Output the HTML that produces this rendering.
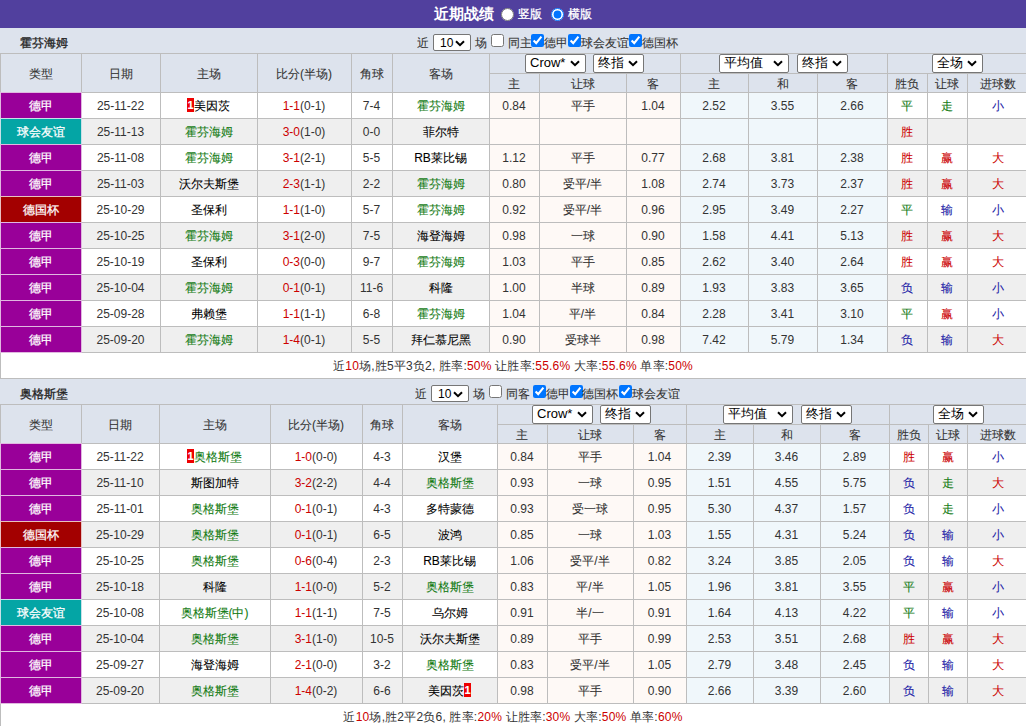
<!DOCTYPE html><html><head><meta charset="utf-8"><style>
html,body{margin:0;padding:0;width:1026px;height:726px;overflow:hidden;background:#fff;}
body{position:relative;font-family:"Liberation Sans",sans-serif;font-size:12px;color:#222;}
.cj{-webkit-text-stroke-width:0.08px;}
div{position:absolute;box-sizing:border-box;}
.c{text-align:center;height:26px;line-height:28px;white-space:nowrap;font-size:12px;color:#333;}
.h{color:#333;}
.nm{font-weight:normal;-webkit-text-stroke-width:0.3px;font-size:12px;color:#222;white-space:nowrap;padding-top:3px;}
.ctl{height:25px;line-height:31px;font-size:12px;color:#333;white-space:nowrap;}
.sel{background:#fff;border:1px solid #767676;border-radius:2px;font-size:13px;color:#000;line-height:15px;}
.sel span{position:absolute;left:4px;top:0;}
.sel svg{position:absolute;right:5px;top:5px;}
.rk{display:inline-block;background:#e00;color:#fff;font-weight:bold;width:7px;height:14px;line-height:14px;font-size:11px;vertical-align:-2px;text-align:center;overflow:hidden;}
.title{left:0;top:0;width:1026px;height:28px;background:#51409e;}
</style></head><body>

<div class="title"></div>
<div style="left:434px;top:0;height:28px;line-height:28px;color:#fff;font-weight:bold;font-size:15px;white-space:nowrap;">近期战绩</div>
<input type="radio" name="r" style="position:absolute;left:501px;top:8px;margin:0;width:13px;height:13px;">
<div style="left:518px;top:0;height:28px;line-height:29px;color:#fff;font-size:12px;white-space:nowrap;-webkit-text-stroke-width:0.3px;">竖版</div>
<input type="radio" name="r" checked style="position:absolute;left:551px;top:8px;margin:0;width:13px;height:13px;">
<div style="left:568px;top:0;height:28px;line-height:29px;color:#fff;font-size:12px;white-space:nowrap;-webkit-text-stroke-width:0.3px;">横版</div>
<div style="left:0px;top:28px;width:1026px;height:25px;background:#dde3ed;"></div>
<div class="nm" style="left:20px;top:28px;height:25px;line-height:25px;">霍芬海姆</div>
<div style="left:0px;top:53px;width:1026px;height:39px;background:#dde3ed;"></div>
<div style="left:0px;top:92px;width:1026px;height:26px;background:#ffffff;"></div>
<div style="left:489px;top:92px;width:191px;height:26px;background:#fef9f6;"></div>
<div style="left:680px;top:92px;width:207px;height:26px;background:#f0f7fb;"></div>
<div style="left:0px;top:118px;width:1026px;height:26px;background:#efefef;"></div>
<div style="left:489px;top:118px;width:191px;height:26px;background:#fef9f6;"></div>
<div style="left:680px;top:118px;width:207px;height:26px;background:#f0f7fb;"></div>
<div style="left:0px;top:144px;width:1026px;height:26px;background:#ffffff;"></div>
<div style="left:489px;top:144px;width:191px;height:26px;background:#fef9f6;"></div>
<div style="left:680px;top:144px;width:207px;height:26px;background:#f0f7fb;"></div>
<div style="left:0px;top:170px;width:1026px;height:26px;background:#efefef;"></div>
<div style="left:489px;top:170px;width:191px;height:26px;background:#fef9f6;"></div>
<div style="left:680px;top:170px;width:207px;height:26px;background:#f0f7fb;"></div>
<div style="left:0px;top:196px;width:1026px;height:26px;background:#ffffff;"></div>
<div style="left:489px;top:196px;width:191px;height:26px;background:#fef9f6;"></div>
<div style="left:680px;top:196px;width:207px;height:26px;background:#f0f7fb;"></div>
<div style="left:0px;top:222px;width:1026px;height:26px;background:#efefef;"></div>
<div style="left:489px;top:222px;width:191px;height:26px;background:#fef9f6;"></div>
<div style="left:680px;top:222px;width:207px;height:26px;background:#f0f7fb;"></div>
<div style="left:0px;top:248px;width:1026px;height:26px;background:#ffffff;"></div>
<div style="left:489px;top:248px;width:191px;height:26px;background:#fef9f6;"></div>
<div style="left:680px;top:248px;width:207px;height:26px;background:#f0f7fb;"></div>
<div style="left:0px;top:274px;width:1026px;height:26px;background:#efefef;"></div>
<div style="left:489px;top:274px;width:191px;height:26px;background:#fef9f6;"></div>
<div style="left:680px;top:274px;width:207px;height:26px;background:#f0f7fb;"></div>
<div style="left:0px;top:300px;width:1026px;height:26px;background:#ffffff;"></div>
<div style="left:489px;top:300px;width:191px;height:26px;background:#fef9f6;"></div>
<div style="left:680px;top:300px;width:207px;height:26px;background:#f0f7fb;"></div>
<div style="left:0px;top:326px;width:1026px;height:26px;background:#efefef;"></div>
<div style="left:489px;top:326px;width:191px;height:26px;background:#fef9f6;"></div>
<div style="left:680px;top:326px;width:207px;height:26px;background:#f0f7fb;"></div>
<div style="left:0px;top:352px;width:1026px;height:26px;background:#fff;"></div>
<div style="left:0px;top:378px;width:1028px;height:1px;background:#bdbdbd;"></div>
<div style="left:0px;top:53px;width:1028px;height:1px;background:#bdbdbd;"></div>
<div style="left:489px;top:73px;width:539px;height:1px;background:#bdbdbd;"></div>
<div style="left:0px;top:92px;width:1028px;height:1px;background:#bdbdbd;"></div>
<div style="left:0px;top:118px;width:1028px;height:1px;background:#bdbdbd;"></div>
<div style="left:0px;top:144px;width:1028px;height:1px;background:#bdbdbd;"></div>
<div style="left:0px;top:170px;width:1028px;height:1px;background:#bdbdbd;"></div>
<div style="left:0px;top:196px;width:1028px;height:1px;background:#bdbdbd;"></div>
<div style="left:0px;top:222px;width:1028px;height:1px;background:#bdbdbd;"></div>
<div style="left:0px;top:248px;width:1028px;height:1px;background:#bdbdbd;"></div>
<div style="left:0px;top:274px;width:1028px;height:1px;background:#bdbdbd;"></div>
<div style="left:0px;top:300px;width:1028px;height:1px;background:#bdbdbd;"></div>
<div style="left:0px;top:326px;width:1028px;height:1px;background:#bdbdbd;"></div>
<div style="left:0px;top:352px;width:1028px;height:1px;background:#bdbdbd;"></div>
<div style="left:0px;top:53px;width:1px;height:325px;background:#bdbdbd;"></div>
<div style="left:81px;top:53px;width:1px;height:299px;background:#bdbdbd;"></div>
<div style="left:160px;top:53px;width:1px;height:299px;background:#bdbdbd;"></div>
<div style="left:257px;top:53px;width:1px;height:299px;background:#bdbdbd;"></div>
<div style="left:351px;top:53px;width:1px;height:299px;background:#bdbdbd;"></div>
<div style="left:392px;top:53px;width:1px;height:299px;background:#bdbdbd;"></div>
<div style="left:489px;top:53px;width:1px;height:299px;background:#bdbdbd;"></div>
<div style="left:539px;top:73px;width:1px;height:279px;background:#bdbdbd;"></div>
<div style="left:626px;top:73px;width:1px;height:279px;background:#bdbdbd;"></div>
<div style="left:680px;top:53px;width:1px;height:299px;background:#bdbdbd;"></div>
<div style="left:748px;top:73px;width:1px;height:279px;background:#bdbdbd;"></div>
<div style="left:817px;top:73px;width:1px;height:279px;background:#bdbdbd;"></div>
<div style="left:887px;top:53px;width:1px;height:299px;background:#bdbdbd;"></div>
<div style="left:927px;top:73px;width:1px;height:279px;background:#bdbdbd;"></div>
<div style="left:967px;top:73px;width:1px;height:279px;background:#bdbdbd;"></div>
<div style="left:1028px;top:53px;width:1px;height:299px;background:#bdbdbd;"></div>
<div style="left:0px;top:92px;width:82px;height:27px;background:#990099;border:1px solid #e0b8e0;"></div>
<div style="left:0px;top:118px;width:82px;height:27px;background:#04a5a5;border:1px solid #c8e0e8;"></div>
<div style="left:0px;top:144px;width:82px;height:27px;background:#990099;border:1px solid #e0b8e0;"></div>
<div style="left:0px;top:170px;width:82px;height:27px;background:#990099;border:1px solid #e0b8e0;"></div>
<div style="left:0px;top:196px;width:82px;height:27px;background:#a30000;border:1px solid #e8c0c0;"></div>
<div style="left:0px;top:222px;width:82px;height:27px;background:#990099;border:1px solid #e0b8e0;"></div>
<div style="left:0px;top:248px;width:82px;height:27px;background:#990099;border:1px solid #e0b8e0;"></div>
<div style="left:0px;top:274px;width:82px;height:27px;background:#990099;border:1px solid #e0b8e0;"></div>
<div style="left:0px;top:300px;width:82px;height:27px;background:#990099;border:1px solid #e0b8e0;"></div>
<div style="left:0px;top:326px;width:82px;height:27px;background:#990099;border:1px solid #e0b8e0;"></div>
<div class="c h cj" style="left:0px;top:53px;width:81px;height:39px;line-height:42px;">类型</div>
<div class="c h cj" style="left:81px;top:53px;width:79px;height:39px;line-height:42px;">日期</div>
<div class="c h cj" style="left:160px;top:53px;width:97px;height:39px;line-height:42px;">主场</div>
<div class="c h cj" style="left:257px;top:53px;width:94px;height:39px;line-height:42px;">比分(半场)</div>
<div class="c h cj" style="left:351px;top:53px;width:41px;height:39px;line-height:42px;">角球</div>
<div class="c h cj" style="left:392px;top:53px;width:97px;height:39px;line-height:42px;">客场</div>
<div class="c h cj" style="left:489px;top:73px;width:50px;height:19px;line-height:22px;">主</div>
<div class="c h cj" style="left:539px;top:73px;width:87px;height:19px;line-height:22px;">让球</div>
<div class="c h cj" style="left:626px;top:73px;width:54px;height:19px;line-height:22px;">客</div>
<div class="c h cj" style="left:680px;top:73px;width:68px;height:19px;line-height:22px;">主</div>
<div class="c h cj" style="left:748px;top:73px;width:69px;height:19px;line-height:22px;">和</div>
<div class="c h cj" style="left:817px;top:73px;width:70px;height:19px;line-height:22px;">客</div>
<div class="c h cj" style="left:887px;top:73px;width:40px;height:19px;line-height:22px;">胜负</div>
<div class="c h cj" style="left:927px;top:73px;width:40px;height:19px;line-height:22px;">让球</div>
<div class="c h cj" style="left:967px;top:73px;width:61px;height:19px;line-height:22px;">进球数</div>
<div class="sel" style="left:525px;top:54px;width:61px;height:19px;"><span style="">Crow*</span><svg width="10" height="7" viewBox="0 0 10 7"><path d="M1 1.2 L5 5.2 L9 1.2" fill="none" stroke="#000" stroke-width="2"/></svg></div>
<div class="sel" style="left:593px;top:54px;width:51px;height:19px;"><span style="">终指</span><svg width="10" height="7" viewBox="0 0 10 7"><path d="M1 1.2 L5 5.2 L9 1.2" fill="none" stroke="#000" stroke-width="2"/></svg></div>
<div class="sel" style="left:719px;top:54px;width:70px;height:19px;"><span style="">平均值</span><svg width="10" height="7" viewBox="0 0 10 7"><path d="M1 1.2 L5 5.2 L9 1.2" fill="none" stroke="#000" stroke-width="2"/></svg></div>
<div class="sel" style="left:797px;top:54px;width:51px;height:19px;"><span style="">终指</span><svg width="10" height="7" viewBox="0 0 10 7"><path d="M1 1.2 L5 5.2 L9 1.2" fill="none" stroke="#000" stroke-width="2"/></svg></div>
<div class="sel" style="left:932px;top:54px;width:51px;height:19px;"><span style="">全场</span><svg width="10" height="7" viewBox="0 0 10 7"><path d="M1 1.2 L5 5.2 L9 1.2" fill="none" stroke="#000" stroke-width="2"/></svg></div>
<div class="ctl cj" style="left:417px;top:28px;">近</div>
<div class="sel" style="left:433px;top:34px;width:38px;height:17px;"><span style="font-size:12px;left:6px;top:1px;">10</span><svg width="10" height="7" viewBox="0 0 10 7"><path d="M1 1.2 L5 5.2 L9 1.2" fill="none" stroke="#000" stroke-width="2"/></svg></div>
<div class="ctl cj" style="left:475px;top:28px;">场</div>
<input type="checkbox"  style="position:absolute;left:491px;top:34px;margin:0;width:13px;height:13px;">
<div class="ctl cj" style="left:508px;top:28px;">同主</div>
<input type="checkbox" checked style="position:absolute;left:531px;top:34px;margin:0;width:13px;height:13px;">
<div class="ctl cj" style="left:544px;top:28px;">德甲</div>
<input type="checkbox" checked style="position:absolute;left:568px;top:34px;margin:0;width:13px;height:13px;">
<div class="ctl cj" style="left:581px;top:28px;">球会友谊</div>
<input type="checkbox" checked style="position:absolute;left:629px;top:34px;margin:0;width:13px;height:13px;">
<div class="ctl cj" style="left:642px;top:28px;">德国杯</div>
<div class="c" style="left:0px;top:92px;width:81px;color:#fff;-webkit-text-stroke-width:0.25px;">德甲</div>
<div class="c" style="left:81px;top:92px;width:79px;">25-11-22</div>
<div class="c" style="left:160px;top:92px;width:97px;-webkit-text-stroke-width:0.08px;"><span class="rk">1</span><span style="color:#000">美因茨</span></div>
<div class="c" style="left:257px;top:92px;width:94px;"><span style="color:#cc0000">1-1</span>(0-1)</div>
<div class="c" style="left:351px;top:92px;width:41px;">7-4</div>
<div class="c" style="left:392px;top:92px;width:97px;-webkit-text-stroke-width:0.08px;"><span style="color:#117a11">霍芬海姆</span></div>
<div class="c" style="left:489px;top:92px;width:50px;">0.84</div>
<div class="c" style="left:539px;top:92px;width:87px;-webkit-text-stroke-width:0.08px;">平手</div>
<div class="c" style="left:626px;top:92px;width:54px;">1.04</div>
<div class="c" style="left:680px;top:92px;width:68px;">2.52</div>
<div class="c" style="left:748px;top:92px;width:69px;">3.55</div>
<div class="c" style="left:817px;top:92px;width:70px;">2.66</div>
<div class="c" style="left:887px;top:92px;width:40px;-webkit-text-stroke-width:0.08px;"><span style="color:#117a11">平</span></div>
<div class="c" style="left:927px;top:92px;width:40px;-webkit-text-stroke-width:0.08px;"><span style="color:#117a11">走</span></div>
<div class="c" style="left:967px;top:92px;width:61px;-webkit-text-stroke-width:0.08px;"><span style="color:#1a1aa6">小</span></div>
<div class="c" style="left:0px;top:118px;width:81px;color:#fff;-webkit-text-stroke-width:0.25px;">球会友谊</div>
<div class="c" style="left:81px;top:118px;width:79px;">25-11-13</div>
<div class="c" style="left:160px;top:118px;width:97px;-webkit-text-stroke-width:0.08px;"><span style="color:#117a11">霍芬海姆</span></div>
<div class="c" style="left:257px;top:118px;width:94px;"><span style="color:#cc0000">3-0</span>(1-0)</div>
<div class="c" style="left:351px;top:118px;width:41px;">0-0</div>
<div class="c" style="left:392px;top:118px;width:97px;-webkit-text-stroke-width:0.08px;"><span style="color:#000">菲尔特</span></div>
<div class="c" style="left:489px;top:118px;width:50px;"></div>
<div class="c" style="left:539px;top:118px;width:87px;-webkit-text-stroke-width:0.08px;"></div>
<div class="c" style="left:626px;top:118px;width:54px;"></div>
<div class="c" style="left:680px;top:118px;width:68px;"></div>
<div class="c" style="left:748px;top:118px;width:69px;"></div>
<div class="c" style="left:817px;top:118px;width:70px;"></div>
<div class="c" style="left:887px;top:118px;width:40px;-webkit-text-stroke-width:0.08px;"><span style="color:#cc0000">胜</span></div>
<div class="c" style="left:927px;top:118px;width:40px;-webkit-text-stroke-width:0.08px;"><span style="color:#000"></span></div>
<div class="c" style="left:967px;top:118px;width:61px;-webkit-text-stroke-width:0.08px;"><span style="color:#000"></span></div>
<div class="c" style="left:0px;top:144px;width:81px;color:#fff;-webkit-text-stroke-width:0.25px;">德甲</div>
<div class="c" style="left:81px;top:144px;width:79px;">25-11-08</div>
<div class="c" style="left:160px;top:144px;width:97px;-webkit-text-stroke-width:0.08px;"><span style="color:#117a11">霍芬海姆</span></div>
<div class="c" style="left:257px;top:144px;width:94px;"><span style="color:#cc0000">3-1</span>(2-1)</div>
<div class="c" style="left:351px;top:144px;width:41px;">5-5</div>
<div class="c" style="left:392px;top:144px;width:97px;-webkit-text-stroke-width:0.08px;"><span style="color:#000">RB莱比锡</span></div>
<div class="c" style="left:489px;top:144px;width:50px;">1.12</div>
<div class="c" style="left:539px;top:144px;width:87px;-webkit-text-stroke-width:0.08px;">平手</div>
<div class="c" style="left:626px;top:144px;width:54px;">0.77</div>
<div class="c" style="left:680px;top:144px;width:68px;">2.68</div>
<div class="c" style="left:748px;top:144px;width:69px;">3.81</div>
<div class="c" style="left:817px;top:144px;width:70px;">2.38</div>
<div class="c" style="left:887px;top:144px;width:40px;-webkit-text-stroke-width:0.08px;"><span style="color:#cc0000">胜</span></div>
<div class="c" style="left:927px;top:144px;width:40px;-webkit-text-stroke-width:0.08px;"><span style="color:#cc0000">赢</span></div>
<div class="c" style="left:967px;top:144px;width:61px;-webkit-text-stroke-width:0.08px;"><span style="color:#cc0000">大</span></div>
<div class="c" style="left:0px;top:170px;width:81px;color:#fff;-webkit-text-stroke-width:0.25px;">德甲</div>
<div class="c" style="left:81px;top:170px;width:79px;">25-11-03</div>
<div class="c" style="left:160px;top:170px;width:97px;-webkit-text-stroke-width:0.08px;"><span style="color:#000">沃尔夫斯堡</span></div>
<div class="c" style="left:257px;top:170px;width:94px;"><span style="color:#cc0000">2-3</span>(1-1)</div>
<div class="c" style="left:351px;top:170px;width:41px;">2-2</div>
<div class="c" style="left:392px;top:170px;width:97px;-webkit-text-stroke-width:0.08px;"><span style="color:#117a11">霍芬海姆</span></div>
<div class="c" style="left:489px;top:170px;width:50px;">0.80</div>
<div class="c" style="left:539px;top:170px;width:87px;-webkit-text-stroke-width:0.08px;">受平/半</div>
<div class="c" style="left:626px;top:170px;width:54px;">1.08</div>
<div class="c" style="left:680px;top:170px;width:68px;">2.74</div>
<div class="c" style="left:748px;top:170px;width:69px;">3.73</div>
<div class="c" style="left:817px;top:170px;width:70px;">2.37</div>
<div class="c" style="left:887px;top:170px;width:40px;-webkit-text-stroke-width:0.08px;"><span style="color:#cc0000">胜</span></div>
<div class="c" style="left:927px;top:170px;width:40px;-webkit-text-stroke-width:0.08px;"><span style="color:#cc0000">赢</span></div>
<div class="c" style="left:967px;top:170px;width:61px;-webkit-text-stroke-width:0.08px;"><span style="color:#cc0000">大</span></div>
<div class="c" style="left:0px;top:196px;width:81px;color:#fff;-webkit-text-stroke-width:0.25px;">德国杯</div>
<div class="c" style="left:81px;top:196px;width:79px;">25-10-29</div>
<div class="c" style="left:160px;top:196px;width:97px;-webkit-text-stroke-width:0.08px;"><span style="color:#000">圣保利</span></div>
<div class="c" style="left:257px;top:196px;width:94px;"><span style="color:#cc0000">1-1</span>(1-0)</div>
<div class="c" style="left:351px;top:196px;width:41px;">5-7</div>
<div class="c" style="left:392px;top:196px;width:97px;-webkit-text-stroke-width:0.08px;"><span style="color:#117a11">霍芬海姆</span></div>
<div class="c" style="left:489px;top:196px;width:50px;">0.92</div>
<div class="c" style="left:539px;top:196px;width:87px;-webkit-text-stroke-width:0.08px;">受平/半</div>
<div class="c" style="left:626px;top:196px;width:54px;">0.96</div>
<div class="c" style="left:680px;top:196px;width:68px;">2.95</div>
<div class="c" style="left:748px;top:196px;width:69px;">3.49</div>
<div class="c" style="left:817px;top:196px;width:70px;">2.27</div>
<div class="c" style="left:887px;top:196px;width:40px;-webkit-text-stroke-width:0.08px;"><span style="color:#117a11">平</span></div>
<div class="c" style="left:927px;top:196px;width:40px;-webkit-text-stroke-width:0.08px;"><span style="color:#1a1aa6">输</span></div>
<div class="c" style="left:967px;top:196px;width:61px;-webkit-text-stroke-width:0.08px;"><span style="color:#1a1aa6">小</span></div>
<div class="c" style="left:0px;top:222px;width:81px;color:#fff;-webkit-text-stroke-width:0.25px;">德甲</div>
<div class="c" style="left:81px;top:222px;width:79px;">25-10-25</div>
<div class="c" style="left:160px;top:222px;width:97px;-webkit-text-stroke-width:0.08px;"><span style="color:#117a11">霍芬海姆</span></div>
<div class="c" style="left:257px;top:222px;width:94px;"><span style="color:#cc0000">3-1</span>(2-0)</div>
<div class="c" style="left:351px;top:222px;width:41px;">7-5</div>
<div class="c" style="left:392px;top:222px;width:97px;-webkit-text-stroke-width:0.08px;"><span style="color:#000">海登海姆</span></div>
<div class="c" style="left:489px;top:222px;width:50px;">0.98</div>
<div class="c" style="left:539px;top:222px;width:87px;-webkit-text-stroke-width:0.08px;">一球</div>
<div class="c" style="left:626px;top:222px;width:54px;">0.90</div>
<div class="c" style="left:680px;top:222px;width:68px;">1.58</div>
<div class="c" style="left:748px;top:222px;width:69px;">4.41</div>
<div class="c" style="left:817px;top:222px;width:70px;">5.13</div>
<div class="c" style="left:887px;top:222px;width:40px;-webkit-text-stroke-width:0.08px;"><span style="color:#cc0000">胜</span></div>
<div class="c" style="left:927px;top:222px;width:40px;-webkit-text-stroke-width:0.08px;"><span style="color:#cc0000">赢</span></div>
<div class="c" style="left:967px;top:222px;width:61px;-webkit-text-stroke-width:0.08px;"><span style="color:#cc0000">大</span></div>
<div class="c" style="left:0px;top:248px;width:81px;color:#fff;-webkit-text-stroke-width:0.25px;">德甲</div>
<div class="c" style="left:81px;top:248px;width:79px;">25-10-19</div>
<div class="c" style="left:160px;top:248px;width:97px;-webkit-text-stroke-width:0.08px;"><span style="color:#000">圣保利</span></div>
<div class="c" style="left:257px;top:248px;width:94px;"><span style="color:#cc0000">0-3</span>(0-0)</div>
<div class="c" style="left:351px;top:248px;width:41px;">9-7</div>
<div class="c" style="left:392px;top:248px;width:97px;-webkit-text-stroke-width:0.08px;"><span style="color:#117a11">霍芬海姆</span></div>
<div class="c" style="left:489px;top:248px;width:50px;">1.03</div>
<div class="c" style="left:539px;top:248px;width:87px;-webkit-text-stroke-width:0.08px;">平手</div>
<div class="c" style="left:626px;top:248px;width:54px;">0.85</div>
<div class="c" style="left:680px;top:248px;width:68px;">2.62</div>
<div class="c" style="left:748px;top:248px;width:69px;">3.40</div>
<div class="c" style="left:817px;top:248px;width:70px;">2.64</div>
<div class="c" style="left:887px;top:248px;width:40px;-webkit-text-stroke-width:0.08px;"><span style="color:#cc0000">胜</span></div>
<div class="c" style="left:927px;top:248px;width:40px;-webkit-text-stroke-width:0.08px;"><span style="color:#cc0000">赢</span></div>
<div class="c" style="left:967px;top:248px;width:61px;-webkit-text-stroke-width:0.08px;"><span style="color:#cc0000">大</span></div>
<div class="c" style="left:0px;top:274px;width:81px;color:#fff;-webkit-text-stroke-width:0.25px;">德甲</div>
<div class="c" style="left:81px;top:274px;width:79px;">25-10-04</div>
<div class="c" style="left:160px;top:274px;width:97px;-webkit-text-stroke-width:0.08px;"><span style="color:#117a11">霍芬海姆</span></div>
<div class="c" style="left:257px;top:274px;width:94px;"><span style="color:#cc0000">0-1</span>(0-1)</div>
<div class="c" style="left:351px;top:274px;width:41px;">11-6</div>
<div class="c" style="left:392px;top:274px;width:97px;-webkit-text-stroke-width:0.08px;"><span style="color:#000">科隆</span></div>
<div class="c" style="left:489px;top:274px;width:50px;">1.00</div>
<div class="c" style="left:539px;top:274px;width:87px;-webkit-text-stroke-width:0.08px;">半球</div>
<div class="c" style="left:626px;top:274px;width:54px;">0.89</div>
<div class="c" style="left:680px;top:274px;width:68px;">1.93</div>
<div class="c" style="left:748px;top:274px;width:69px;">3.83</div>
<div class="c" style="left:817px;top:274px;width:70px;">3.65</div>
<div class="c" style="left:887px;top:274px;width:40px;-webkit-text-stroke-width:0.08px;"><span style="color:#1a1aa6">负</span></div>
<div class="c" style="left:927px;top:274px;width:40px;-webkit-text-stroke-width:0.08px;"><span style="color:#1a1aa6">输</span></div>
<div class="c" style="left:967px;top:274px;width:61px;-webkit-text-stroke-width:0.08px;"><span style="color:#1a1aa6">小</span></div>
<div class="c" style="left:0px;top:300px;width:81px;color:#fff;-webkit-text-stroke-width:0.25px;">德甲</div>
<div class="c" style="left:81px;top:300px;width:79px;">25-09-28</div>
<div class="c" style="left:160px;top:300px;width:97px;-webkit-text-stroke-width:0.08px;"><span style="color:#000">弗赖堡</span></div>
<div class="c" style="left:257px;top:300px;width:94px;"><span style="color:#cc0000">1-1</span>(1-1)</div>
<div class="c" style="left:351px;top:300px;width:41px;">6-8</div>
<div class="c" style="left:392px;top:300px;width:97px;-webkit-text-stroke-width:0.08px;"><span style="color:#117a11">霍芬海姆</span></div>
<div class="c" style="left:489px;top:300px;width:50px;">1.04</div>
<div class="c" style="left:539px;top:300px;width:87px;-webkit-text-stroke-width:0.08px;">平/半</div>
<div class="c" style="left:626px;top:300px;width:54px;">0.84</div>
<div class="c" style="left:680px;top:300px;width:68px;">2.28</div>
<div class="c" style="left:748px;top:300px;width:69px;">3.41</div>
<div class="c" style="left:817px;top:300px;width:70px;">3.10</div>
<div class="c" style="left:887px;top:300px;width:40px;-webkit-text-stroke-width:0.08px;"><span style="color:#117a11">平</span></div>
<div class="c" style="left:927px;top:300px;width:40px;-webkit-text-stroke-width:0.08px;"><span style="color:#cc0000">赢</span></div>
<div class="c" style="left:967px;top:300px;width:61px;-webkit-text-stroke-width:0.08px;"><span style="color:#1a1aa6">小</span></div>
<div class="c" style="left:0px;top:326px;width:81px;color:#fff;-webkit-text-stroke-width:0.25px;">德甲</div>
<div class="c" style="left:81px;top:326px;width:79px;">25-09-20</div>
<div class="c" style="left:160px;top:326px;width:97px;-webkit-text-stroke-width:0.08px;"><span style="color:#117a11">霍芬海姆</span></div>
<div class="c" style="left:257px;top:326px;width:94px;"><span style="color:#cc0000">1-4</span>(0-1)</div>
<div class="c" style="left:351px;top:326px;width:41px;">5-5</div>
<div class="c" style="left:392px;top:326px;width:97px;-webkit-text-stroke-width:0.08px;"><span style="color:#000">拜仁慕尼黑</span></div>
<div class="c" style="left:489px;top:326px;width:50px;">0.90</div>
<div class="c" style="left:539px;top:326px;width:87px;-webkit-text-stroke-width:0.08px;">受球半</div>
<div class="c" style="left:626px;top:326px;width:54px;">0.98</div>
<div class="c" style="left:680px;top:326px;width:68px;">7.42</div>
<div class="c" style="left:748px;top:326px;width:69px;">5.79</div>
<div class="c" style="left:817px;top:326px;width:70px;">1.34</div>
<div class="c" style="left:887px;top:326px;width:40px;-webkit-text-stroke-width:0.08px;"><span style="color:#1a1aa6">负</span></div>
<div class="c" style="left:927px;top:326px;width:40px;-webkit-text-stroke-width:0.08px;"><span style="color:#1a1aa6">输</span></div>
<div class="c" style="left:967px;top:326px;width:61px;-webkit-text-stroke-width:0.08px;"><span style="color:#cc0000">大</span></div>
<div class="c" style="left:0;top:352px;width:1026px;letter-spacing:0.2px;">近<span style="color:#cc0000">10</span>场,胜5平3负2, 胜率:<span style="color:#cc0000">50%</span> 让胜率:<span style="color:#cc0000">55.6%</span> 大率:<span style="color:#cc0000">55.6%</span> 单率:<span style="color:#cc0000">50%</span></div>
<div style="left:0px;top:379px;width:1026px;height:25px;background:#dde3ed;"></div>
<div class="nm" style="left:20px;top:379px;height:25px;line-height:25px;">奥格斯堡</div>
<div style="left:0px;top:404px;width:1026px;height:39px;background:#dde3ed;"></div>
<div style="left:0px;top:443px;width:1026px;height:26px;background:#ffffff;"></div>
<div style="left:497px;top:443px;width:189px;height:26px;background:#fef9f6;"></div>
<div style="left:686px;top:443px;width:203px;height:26px;background:#f0f7fb;"></div>
<div style="left:0px;top:469px;width:1026px;height:26px;background:#efefef;"></div>
<div style="left:497px;top:469px;width:189px;height:26px;background:#fef9f6;"></div>
<div style="left:686px;top:469px;width:203px;height:26px;background:#f0f7fb;"></div>
<div style="left:0px;top:495px;width:1026px;height:26px;background:#ffffff;"></div>
<div style="left:497px;top:495px;width:189px;height:26px;background:#fef9f6;"></div>
<div style="left:686px;top:495px;width:203px;height:26px;background:#f0f7fb;"></div>
<div style="left:0px;top:521px;width:1026px;height:26px;background:#efefef;"></div>
<div style="left:497px;top:521px;width:189px;height:26px;background:#fef9f6;"></div>
<div style="left:686px;top:521px;width:203px;height:26px;background:#f0f7fb;"></div>
<div style="left:0px;top:547px;width:1026px;height:26px;background:#ffffff;"></div>
<div style="left:497px;top:547px;width:189px;height:26px;background:#fef9f6;"></div>
<div style="left:686px;top:547px;width:203px;height:26px;background:#f0f7fb;"></div>
<div style="left:0px;top:573px;width:1026px;height:26px;background:#efefef;"></div>
<div style="left:497px;top:573px;width:189px;height:26px;background:#fef9f6;"></div>
<div style="left:686px;top:573px;width:203px;height:26px;background:#f0f7fb;"></div>
<div style="left:0px;top:599px;width:1026px;height:26px;background:#ffffff;"></div>
<div style="left:497px;top:599px;width:189px;height:26px;background:#fef9f6;"></div>
<div style="left:686px;top:599px;width:203px;height:26px;background:#f0f7fb;"></div>
<div style="left:0px;top:625px;width:1026px;height:26px;background:#efefef;"></div>
<div style="left:497px;top:625px;width:189px;height:26px;background:#fef9f6;"></div>
<div style="left:686px;top:625px;width:203px;height:26px;background:#f0f7fb;"></div>
<div style="left:0px;top:651px;width:1026px;height:26px;background:#ffffff;"></div>
<div style="left:497px;top:651px;width:189px;height:26px;background:#fef9f6;"></div>
<div style="left:686px;top:651px;width:203px;height:26px;background:#f0f7fb;"></div>
<div style="left:0px;top:677px;width:1026px;height:26px;background:#efefef;"></div>
<div style="left:497px;top:677px;width:189px;height:26px;background:#fef9f6;"></div>
<div style="left:686px;top:677px;width:203px;height:26px;background:#f0f7fb;"></div>
<div style="left:0px;top:703px;width:1026px;height:26px;background:#fff;"></div>
<div style="left:0px;top:729px;width:1028px;height:1px;background:#bdbdbd;"></div>
<div style="left:0px;top:404px;width:1028px;height:1px;background:#bdbdbd;"></div>
<div style="left:497px;top:424px;width:531px;height:1px;background:#bdbdbd;"></div>
<div style="left:0px;top:443px;width:1028px;height:1px;background:#bdbdbd;"></div>
<div style="left:0px;top:469px;width:1028px;height:1px;background:#bdbdbd;"></div>
<div style="left:0px;top:495px;width:1028px;height:1px;background:#bdbdbd;"></div>
<div style="left:0px;top:521px;width:1028px;height:1px;background:#bdbdbd;"></div>
<div style="left:0px;top:547px;width:1028px;height:1px;background:#bdbdbd;"></div>
<div style="left:0px;top:573px;width:1028px;height:1px;background:#bdbdbd;"></div>
<div style="left:0px;top:599px;width:1028px;height:1px;background:#bdbdbd;"></div>
<div style="left:0px;top:625px;width:1028px;height:1px;background:#bdbdbd;"></div>
<div style="left:0px;top:651px;width:1028px;height:1px;background:#bdbdbd;"></div>
<div style="left:0px;top:677px;width:1028px;height:1px;background:#bdbdbd;"></div>
<div style="left:0px;top:703px;width:1028px;height:1px;background:#bdbdbd;"></div>
<div style="left:0px;top:404px;width:1px;height:325px;background:#bdbdbd;"></div>
<div style="left:81px;top:404px;width:1px;height:299px;background:#bdbdbd;"></div>
<div style="left:159px;top:404px;width:1px;height:299px;background:#bdbdbd;"></div>
<div style="left:270px;top:404px;width:1px;height:299px;background:#bdbdbd;"></div>
<div style="left:362px;top:404px;width:1px;height:299px;background:#bdbdbd;"></div>
<div style="left:402px;top:404px;width:1px;height:299px;background:#bdbdbd;"></div>
<div style="left:497px;top:404px;width:1px;height:299px;background:#bdbdbd;"></div>
<div style="left:547px;top:424px;width:1px;height:279px;background:#bdbdbd;"></div>
<div style="left:633px;top:424px;width:1px;height:279px;background:#bdbdbd;"></div>
<div style="left:686px;top:404px;width:1px;height:299px;background:#bdbdbd;"></div>
<div style="left:753px;top:424px;width:1px;height:279px;background:#bdbdbd;"></div>
<div style="left:820px;top:424px;width:1px;height:279px;background:#bdbdbd;"></div>
<div style="left:889px;top:404px;width:1px;height:299px;background:#bdbdbd;"></div>
<div style="left:928px;top:424px;width:1px;height:279px;background:#bdbdbd;"></div>
<div style="left:967px;top:424px;width:1px;height:279px;background:#bdbdbd;"></div>
<div style="left:1028px;top:404px;width:1px;height:299px;background:#bdbdbd;"></div>
<div style="left:0px;top:443px;width:82px;height:27px;background:#990099;border:1px solid #e0b8e0;"></div>
<div style="left:0px;top:469px;width:82px;height:27px;background:#990099;border:1px solid #e0b8e0;"></div>
<div style="left:0px;top:495px;width:82px;height:27px;background:#990099;border:1px solid #e0b8e0;"></div>
<div style="left:0px;top:521px;width:82px;height:27px;background:#a30000;border:1px solid #e8c0c0;"></div>
<div style="left:0px;top:547px;width:82px;height:27px;background:#990099;border:1px solid #e0b8e0;"></div>
<div style="left:0px;top:573px;width:82px;height:27px;background:#990099;border:1px solid #e0b8e0;"></div>
<div style="left:0px;top:599px;width:82px;height:27px;background:#04a5a5;border:1px solid #c8e0e8;"></div>
<div style="left:0px;top:625px;width:82px;height:27px;background:#990099;border:1px solid #e0b8e0;"></div>
<div style="left:0px;top:651px;width:82px;height:27px;background:#990099;border:1px solid #e0b8e0;"></div>
<div style="left:0px;top:677px;width:82px;height:27px;background:#990099;border:1px solid #e0b8e0;"></div>
<div class="c h cj" style="left:0px;top:404px;width:81px;height:39px;line-height:42px;">类型</div>
<div class="c h cj" style="left:81px;top:404px;width:78px;height:39px;line-height:42px;">日期</div>
<div class="c h cj" style="left:159px;top:404px;width:111px;height:39px;line-height:42px;">主场</div>
<div class="c h cj" style="left:270px;top:404px;width:92px;height:39px;line-height:42px;">比分(半场)</div>
<div class="c h cj" style="left:362px;top:404px;width:40px;height:39px;line-height:42px;">角球</div>
<div class="c h cj" style="left:402px;top:404px;width:95px;height:39px;line-height:42px;">客场</div>
<div class="c h cj" style="left:497px;top:424px;width:50px;height:19px;line-height:22px;">主</div>
<div class="c h cj" style="left:547px;top:424px;width:86px;height:19px;line-height:22px;">让球</div>
<div class="c h cj" style="left:633px;top:424px;width:53px;height:19px;line-height:22px;">客</div>
<div class="c h cj" style="left:686px;top:424px;width:67px;height:19px;line-height:22px;">主</div>
<div class="c h cj" style="left:753px;top:424px;width:67px;height:19px;line-height:22px;">和</div>
<div class="c h cj" style="left:820px;top:424px;width:69px;height:19px;line-height:22px;">客</div>
<div class="c h cj" style="left:889px;top:424px;width:39px;height:19px;line-height:22px;">胜负</div>
<div class="c h cj" style="left:928px;top:424px;width:39px;height:19px;line-height:22px;">让球</div>
<div class="c h cj" style="left:967px;top:424px;width:61px;height:19px;line-height:22px;">进球数</div>
<div class="sel" style="left:532px;top:405px;width:61px;height:19px;"><span style="">Crow*</span><svg width="10" height="7" viewBox="0 0 10 7"><path d="M1 1.2 L5 5.2 L9 1.2" fill="none" stroke="#000" stroke-width="2"/></svg></div>
<div class="sel" style="left:600px;top:405px;width:51px;height:19px;"><span style="">终指</span><svg width="10" height="7" viewBox="0 0 10 7"><path d="M1 1.2 L5 5.2 L9 1.2" fill="none" stroke="#000" stroke-width="2"/></svg></div>
<div class="sel" style="left:723px;top:405px;width:70px;height:19px;"><span style="">平均值</span><svg width="10" height="7" viewBox="0 0 10 7"><path d="M1 1.2 L5 5.2 L9 1.2" fill="none" stroke="#000" stroke-width="2"/></svg></div>
<div class="sel" style="left:801px;top:405px;width:51px;height:19px;"><span style="">终指</span><svg width="10" height="7" viewBox="0 0 10 7"><path d="M1 1.2 L5 5.2 L9 1.2" fill="none" stroke="#000" stroke-width="2"/></svg></div>
<div class="sel" style="left:933px;top:405px;width:51px;height:19px;"><span style="">全场</span><svg width="10" height="7" viewBox="0 0 10 7"><path d="M1 1.2 L5 5.2 L9 1.2" fill="none" stroke="#000" stroke-width="2"/></svg></div>
<div class="ctl cj" style="left:415px;top:379px;">近</div>
<div class="sel" style="left:431px;top:385px;width:38px;height:17px;"><span style="font-size:12px;left:6px;top:1px;">10</span><svg width="10" height="7" viewBox="0 0 10 7"><path d="M1 1.2 L5 5.2 L9 1.2" fill="none" stroke="#000" stroke-width="2"/></svg></div>
<div class="ctl cj" style="left:473px;top:379px;">场</div>
<input type="checkbox"  style="position:absolute;left:489px;top:385px;margin:0;width:13px;height:13px;">
<div class="ctl cj" style="left:506px;top:379px;">同客</div>
<input type="checkbox" checked style="position:absolute;left:533px;top:385px;margin:0;width:13px;height:13px;">
<div class="ctl cj" style="left:546px;top:379px;">德甲</div>
<input type="checkbox" checked style="position:absolute;left:570px;top:385px;margin:0;width:13px;height:13px;">
<div class="ctl cj" style="left:582px;top:379px;">德国杯</div>
<input type="checkbox" checked style="position:absolute;left:619px;top:385px;margin:0;width:13px;height:13px;">
<div class="ctl cj" style="left:632px;top:379px;">球会友谊</div>
<div class="c" style="left:0px;top:443px;width:81px;color:#fff;-webkit-text-stroke-width:0.25px;">德甲</div>
<div class="c" style="left:81px;top:443px;width:78px;">25-11-22</div>
<div class="c" style="left:159px;top:443px;width:111px;-webkit-text-stroke-width:0.08px;"><span class="rk">1</span><span style="color:#117a11">奥格斯堡</span></div>
<div class="c" style="left:270px;top:443px;width:92px;"><span style="color:#cc0000">1-0</span>(0-0)</div>
<div class="c" style="left:362px;top:443px;width:40px;">4-3</div>
<div class="c" style="left:402px;top:443px;width:95px;-webkit-text-stroke-width:0.08px;"><span style="color:#000">汉堡</span></div>
<div class="c" style="left:497px;top:443px;width:50px;">0.84</div>
<div class="c" style="left:547px;top:443px;width:86px;-webkit-text-stroke-width:0.08px;">平手</div>
<div class="c" style="left:633px;top:443px;width:53px;">1.04</div>
<div class="c" style="left:686px;top:443px;width:67px;">2.39</div>
<div class="c" style="left:753px;top:443px;width:67px;">3.46</div>
<div class="c" style="left:820px;top:443px;width:69px;">2.89</div>
<div class="c" style="left:889px;top:443px;width:39px;-webkit-text-stroke-width:0.08px;"><span style="color:#cc0000">胜</span></div>
<div class="c" style="left:928px;top:443px;width:39px;-webkit-text-stroke-width:0.08px;"><span style="color:#cc0000">赢</span></div>
<div class="c" style="left:967px;top:443px;width:61px;-webkit-text-stroke-width:0.08px;"><span style="color:#1a1aa6">小</span></div>
<div class="c" style="left:0px;top:469px;width:81px;color:#fff;-webkit-text-stroke-width:0.25px;">德甲</div>
<div class="c" style="left:81px;top:469px;width:78px;">25-11-10</div>
<div class="c" style="left:159px;top:469px;width:111px;-webkit-text-stroke-width:0.08px;"><span style="color:#000">斯图加特</span></div>
<div class="c" style="left:270px;top:469px;width:92px;"><span style="color:#cc0000">3-2</span>(2-2)</div>
<div class="c" style="left:362px;top:469px;width:40px;">4-4</div>
<div class="c" style="left:402px;top:469px;width:95px;-webkit-text-stroke-width:0.08px;"><span style="color:#117a11">奥格斯堡</span></div>
<div class="c" style="left:497px;top:469px;width:50px;">0.93</div>
<div class="c" style="left:547px;top:469px;width:86px;-webkit-text-stroke-width:0.08px;">一球</div>
<div class="c" style="left:633px;top:469px;width:53px;">0.95</div>
<div class="c" style="left:686px;top:469px;width:67px;">1.51</div>
<div class="c" style="left:753px;top:469px;width:67px;">4.55</div>
<div class="c" style="left:820px;top:469px;width:69px;">5.75</div>
<div class="c" style="left:889px;top:469px;width:39px;-webkit-text-stroke-width:0.08px;"><span style="color:#1a1aa6">负</span></div>
<div class="c" style="left:928px;top:469px;width:39px;-webkit-text-stroke-width:0.08px;"><span style="color:#117a11">走</span></div>
<div class="c" style="left:967px;top:469px;width:61px;-webkit-text-stroke-width:0.08px;"><span style="color:#cc0000">大</span></div>
<div class="c" style="left:0px;top:495px;width:81px;color:#fff;-webkit-text-stroke-width:0.25px;">德甲</div>
<div class="c" style="left:81px;top:495px;width:78px;">25-11-01</div>
<div class="c" style="left:159px;top:495px;width:111px;-webkit-text-stroke-width:0.08px;"><span style="color:#117a11">奥格斯堡</span></div>
<div class="c" style="left:270px;top:495px;width:92px;"><span style="color:#cc0000">0-1</span>(0-1)</div>
<div class="c" style="left:362px;top:495px;width:40px;">4-3</div>
<div class="c" style="left:402px;top:495px;width:95px;-webkit-text-stroke-width:0.08px;"><span style="color:#000">多特蒙德</span></div>
<div class="c" style="left:497px;top:495px;width:50px;">0.93</div>
<div class="c" style="left:547px;top:495px;width:86px;-webkit-text-stroke-width:0.08px;">受一球</div>
<div class="c" style="left:633px;top:495px;width:53px;">0.95</div>
<div class="c" style="left:686px;top:495px;width:67px;">5.30</div>
<div class="c" style="left:753px;top:495px;width:67px;">4.37</div>
<div class="c" style="left:820px;top:495px;width:69px;">1.57</div>
<div class="c" style="left:889px;top:495px;width:39px;-webkit-text-stroke-width:0.08px;"><span style="color:#1a1aa6">负</span></div>
<div class="c" style="left:928px;top:495px;width:39px;-webkit-text-stroke-width:0.08px;"><span style="color:#117a11">走</span></div>
<div class="c" style="left:967px;top:495px;width:61px;-webkit-text-stroke-width:0.08px;"><span style="color:#1a1aa6">小</span></div>
<div class="c" style="left:0px;top:521px;width:81px;color:#fff;-webkit-text-stroke-width:0.25px;">德国杯</div>
<div class="c" style="left:81px;top:521px;width:78px;">25-10-29</div>
<div class="c" style="left:159px;top:521px;width:111px;-webkit-text-stroke-width:0.08px;"><span style="color:#117a11">奥格斯堡</span></div>
<div class="c" style="left:270px;top:521px;width:92px;"><span style="color:#cc0000">0-1</span>(0-1)</div>
<div class="c" style="left:362px;top:521px;width:40px;">6-5</div>
<div class="c" style="left:402px;top:521px;width:95px;-webkit-text-stroke-width:0.08px;"><span style="color:#000">波鸿</span></div>
<div class="c" style="left:497px;top:521px;width:50px;">0.85</div>
<div class="c" style="left:547px;top:521px;width:86px;-webkit-text-stroke-width:0.08px;">一球</div>
<div class="c" style="left:633px;top:521px;width:53px;">1.03</div>
<div class="c" style="left:686px;top:521px;width:67px;">1.55</div>
<div class="c" style="left:753px;top:521px;width:67px;">4.31</div>
<div class="c" style="left:820px;top:521px;width:69px;">5.24</div>
<div class="c" style="left:889px;top:521px;width:39px;-webkit-text-stroke-width:0.08px;"><span style="color:#1a1aa6">负</span></div>
<div class="c" style="left:928px;top:521px;width:39px;-webkit-text-stroke-width:0.08px;"><span style="color:#1a1aa6">输</span></div>
<div class="c" style="left:967px;top:521px;width:61px;-webkit-text-stroke-width:0.08px;"><span style="color:#1a1aa6">小</span></div>
<div class="c" style="left:0px;top:547px;width:81px;color:#fff;-webkit-text-stroke-width:0.25px;">德甲</div>
<div class="c" style="left:81px;top:547px;width:78px;">25-10-25</div>
<div class="c" style="left:159px;top:547px;width:111px;-webkit-text-stroke-width:0.08px;"><span style="color:#117a11">奥格斯堡</span></div>
<div class="c" style="left:270px;top:547px;width:92px;"><span style="color:#cc0000">0-6</span>(0-4)</div>
<div class="c" style="left:362px;top:547px;width:40px;">2-3</div>
<div class="c" style="left:402px;top:547px;width:95px;-webkit-text-stroke-width:0.08px;"><span style="color:#000">RB莱比锡</span></div>
<div class="c" style="left:497px;top:547px;width:50px;">1.06</div>
<div class="c" style="left:547px;top:547px;width:86px;-webkit-text-stroke-width:0.08px;">受平/半</div>
<div class="c" style="left:633px;top:547px;width:53px;">0.82</div>
<div class="c" style="left:686px;top:547px;width:67px;">3.24</div>
<div class="c" style="left:753px;top:547px;width:67px;">3.85</div>
<div class="c" style="left:820px;top:547px;width:69px;">2.05</div>
<div class="c" style="left:889px;top:547px;width:39px;-webkit-text-stroke-width:0.08px;"><span style="color:#1a1aa6">负</span></div>
<div class="c" style="left:928px;top:547px;width:39px;-webkit-text-stroke-width:0.08px;"><span style="color:#1a1aa6">输</span></div>
<div class="c" style="left:967px;top:547px;width:61px;-webkit-text-stroke-width:0.08px;"><span style="color:#cc0000">大</span></div>
<div class="c" style="left:0px;top:573px;width:81px;color:#fff;-webkit-text-stroke-width:0.25px;">德甲</div>
<div class="c" style="left:81px;top:573px;width:78px;">25-10-18</div>
<div class="c" style="left:159px;top:573px;width:111px;-webkit-text-stroke-width:0.08px;"><span style="color:#000">科隆</span></div>
<div class="c" style="left:270px;top:573px;width:92px;"><span style="color:#cc0000">1-1</span>(0-0)</div>
<div class="c" style="left:362px;top:573px;width:40px;">5-2</div>
<div class="c" style="left:402px;top:573px;width:95px;-webkit-text-stroke-width:0.08px;"><span style="color:#117a11">奥格斯堡</span></div>
<div class="c" style="left:497px;top:573px;width:50px;">0.83</div>
<div class="c" style="left:547px;top:573px;width:86px;-webkit-text-stroke-width:0.08px;">平/半</div>
<div class="c" style="left:633px;top:573px;width:53px;">1.05</div>
<div class="c" style="left:686px;top:573px;width:67px;">1.96</div>
<div class="c" style="left:753px;top:573px;width:67px;">3.81</div>
<div class="c" style="left:820px;top:573px;width:69px;">3.55</div>
<div class="c" style="left:889px;top:573px;width:39px;-webkit-text-stroke-width:0.08px;"><span style="color:#117a11">平</span></div>
<div class="c" style="left:928px;top:573px;width:39px;-webkit-text-stroke-width:0.08px;"><span style="color:#cc0000">赢</span></div>
<div class="c" style="left:967px;top:573px;width:61px;-webkit-text-stroke-width:0.08px;"><span style="color:#1a1aa6">小</span></div>
<div class="c" style="left:0px;top:599px;width:81px;color:#fff;-webkit-text-stroke-width:0.25px;">球会友谊</div>
<div class="c" style="left:81px;top:599px;width:78px;">25-10-08</div>
<div class="c" style="left:159px;top:599px;width:111px;-webkit-text-stroke-width:0.08px;"><span style="color:#117a11">奥格斯堡(中)</span></div>
<div class="c" style="left:270px;top:599px;width:92px;"><span style="color:#cc0000">1-1</span>(1-1)</div>
<div class="c" style="left:362px;top:599px;width:40px;">7-5</div>
<div class="c" style="left:402px;top:599px;width:95px;-webkit-text-stroke-width:0.08px;"><span style="color:#000">乌尔姆</span></div>
<div class="c" style="left:497px;top:599px;width:50px;">0.91</div>
<div class="c" style="left:547px;top:599px;width:86px;-webkit-text-stroke-width:0.08px;">半/一</div>
<div class="c" style="left:633px;top:599px;width:53px;">0.91</div>
<div class="c" style="left:686px;top:599px;width:67px;">1.64</div>
<div class="c" style="left:753px;top:599px;width:67px;">4.13</div>
<div class="c" style="left:820px;top:599px;width:69px;">4.22</div>
<div class="c" style="left:889px;top:599px;width:39px;-webkit-text-stroke-width:0.08px;"><span style="color:#117a11">平</span></div>
<div class="c" style="left:928px;top:599px;width:39px;-webkit-text-stroke-width:0.08px;"><span style="color:#1a1aa6">输</span></div>
<div class="c" style="left:967px;top:599px;width:61px;-webkit-text-stroke-width:0.08px;"><span style="color:#1a1aa6">小</span></div>
<div class="c" style="left:0px;top:625px;width:81px;color:#fff;-webkit-text-stroke-width:0.25px;">德甲</div>
<div class="c" style="left:81px;top:625px;width:78px;">25-10-04</div>
<div class="c" style="left:159px;top:625px;width:111px;-webkit-text-stroke-width:0.08px;"><span style="color:#117a11">奥格斯堡</span></div>
<div class="c" style="left:270px;top:625px;width:92px;"><span style="color:#cc0000">3-1</span>(1-0)</div>
<div class="c" style="left:362px;top:625px;width:40px;">10-5</div>
<div class="c" style="left:402px;top:625px;width:95px;-webkit-text-stroke-width:0.08px;"><span style="color:#000">沃尔夫斯堡</span></div>
<div class="c" style="left:497px;top:625px;width:50px;">0.89</div>
<div class="c" style="left:547px;top:625px;width:86px;-webkit-text-stroke-width:0.08px;">平手</div>
<div class="c" style="left:633px;top:625px;width:53px;">0.99</div>
<div class="c" style="left:686px;top:625px;width:67px;">2.53</div>
<div class="c" style="left:753px;top:625px;width:67px;">3.51</div>
<div class="c" style="left:820px;top:625px;width:69px;">2.68</div>
<div class="c" style="left:889px;top:625px;width:39px;-webkit-text-stroke-width:0.08px;"><span style="color:#cc0000">胜</span></div>
<div class="c" style="left:928px;top:625px;width:39px;-webkit-text-stroke-width:0.08px;"><span style="color:#cc0000">赢</span></div>
<div class="c" style="left:967px;top:625px;width:61px;-webkit-text-stroke-width:0.08px;"><span style="color:#cc0000">大</span></div>
<div class="c" style="left:0px;top:651px;width:81px;color:#fff;-webkit-text-stroke-width:0.25px;">德甲</div>
<div class="c" style="left:81px;top:651px;width:78px;">25-09-27</div>
<div class="c" style="left:159px;top:651px;width:111px;-webkit-text-stroke-width:0.08px;"><span style="color:#000">海登海姆</span></div>
<div class="c" style="left:270px;top:651px;width:92px;"><span style="color:#cc0000">2-1</span>(0-0)</div>
<div class="c" style="left:362px;top:651px;width:40px;">3-2</div>
<div class="c" style="left:402px;top:651px;width:95px;-webkit-text-stroke-width:0.08px;"><span style="color:#117a11">奥格斯堡</span></div>
<div class="c" style="left:497px;top:651px;width:50px;">0.83</div>
<div class="c" style="left:547px;top:651px;width:86px;-webkit-text-stroke-width:0.08px;">受平/半</div>
<div class="c" style="left:633px;top:651px;width:53px;">1.05</div>
<div class="c" style="left:686px;top:651px;width:67px;">2.79</div>
<div class="c" style="left:753px;top:651px;width:67px;">3.48</div>
<div class="c" style="left:820px;top:651px;width:69px;">2.45</div>
<div class="c" style="left:889px;top:651px;width:39px;-webkit-text-stroke-width:0.08px;"><span style="color:#1a1aa6">负</span></div>
<div class="c" style="left:928px;top:651px;width:39px;-webkit-text-stroke-width:0.08px;"><span style="color:#1a1aa6">输</span></div>
<div class="c" style="left:967px;top:651px;width:61px;-webkit-text-stroke-width:0.08px;"><span style="color:#cc0000">大</span></div>
<div class="c" style="left:0px;top:677px;width:81px;color:#fff;-webkit-text-stroke-width:0.25px;">德甲</div>
<div class="c" style="left:81px;top:677px;width:78px;">25-09-20</div>
<div class="c" style="left:159px;top:677px;width:111px;-webkit-text-stroke-width:0.08px;"><span style="color:#117a11">奥格斯堡</span></div>
<div class="c" style="left:270px;top:677px;width:92px;"><span style="color:#cc0000">1-4</span>(0-2)</div>
<div class="c" style="left:362px;top:677px;width:40px;">6-6</div>
<div class="c" style="left:402px;top:677px;width:95px;-webkit-text-stroke-width:0.08px;"><span style="color:#000">美因茨</span><span class="rk">1</span></div>
<div class="c" style="left:497px;top:677px;width:50px;">0.98</div>
<div class="c" style="left:547px;top:677px;width:86px;-webkit-text-stroke-width:0.08px;">平手</div>
<div class="c" style="left:633px;top:677px;width:53px;">0.90</div>
<div class="c" style="left:686px;top:677px;width:67px;">2.66</div>
<div class="c" style="left:753px;top:677px;width:67px;">3.39</div>
<div class="c" style="left:820px;top:677px;width:69px;">2.60</div>
<div class="c" style="left:889px;top:677px;width:39px;-webkit-text-stroke-width:0.08px;"><span style="color:#1a1aa6">负</span></div>
<div class="c" style="left:928px;top:677px;width:39px;-webkit-text-stroke-width:0.08px;"><span style="color:#1a1aa6">输</span></div>
<div class="c" style="left:967px;top:677px;width:61px;-webkit-text-stroke-width:0.08px;"><span style="color:#cc0000">大</span></div>
<div class="c" style="left:0;top:703px;width:1026px;letter-spacing:0.2px;">近<span style="color:#cc0000">10</span>场,胜2平2负6, 胜率:<span style="color:#cc0000">20%</span> 让胜率:<span style="color:#cc0000">30%</span> 大率:<span style="color:#cc0000">50%</span> 单率:<span style="color:#cc0000">60%</span></div>
</body></html>
